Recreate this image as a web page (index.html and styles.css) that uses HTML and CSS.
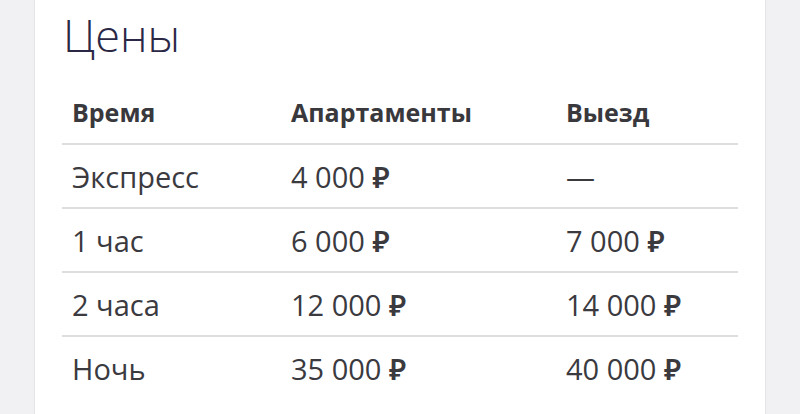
FILE: index.html
```html
<!DOCTYPE html>
<html lang="ru">
<head>
<meta charset="utf-8">
<link rel="stylesheet" href="styles.css">
</head>
<body>
<div class="page">
  <section class="card">
    <h1 class="title">Цены</h1>
    <table class="prices">
      <thead>
        <tr><th class="c1">Время</th><th class="c2">Апартаменты</th><th class="c3">Выезд</th></tr>
      </thead>
      <tbody>
        <tr><td>Экспресс</td><td>4 000 <span class="rub">₽</span></td><td>—</td></tr>
        <tr><td>1 час</td><td>6 000 <span class="rub">₽</span></td><td>7 000 <span class="rub">₽</span></td></tr>
        <tr><td>2 часа</td><td>12 000 <span class="rub">₽</span></td><td>14 000 <span class="rub">₽</span></td></tr>
        <tr><td>Ночь</td><td>35 000 <span class="rub">₽</span></td><td>40 000 <span class="rub">₽</span></td></tr>
      </tbody>
    </table>
  </section>
</div>
</body>
</html>
```
FILE: styles.css
```css
html, body {
  margin: 0;
  padding: 0;
  height: 100%;
}
body {
  background: #f1f1f4;
  font-family: "Open Sans", "Noto Sans", sans-serif;
  overflow: hidden;
}
.page {
  padding: 0 34px;
  height: 100%;
}
.card {
  background: #ffffff;
  border-left: 1px solid #e3e3e8;
  border-right: 1px solid #e3e3e8;
  height: 100%;
  padding: 8px 26px 0 27px;
  box-sizing: border-box;
}
.title {
  margin: 0;
  font-size: 45px;
  line-height: 54px;
  font-weight: 300;
  color: #2b2846;
  padding-left: 1px;
}
.prices {
  width: 676px;
  border-collapse: collapse;
  table-layout: fixed;
  margin-top: 19px;
}
.prices th,
.prices td {
  text-align: left;
  padding: 0 0 0 10px;
  vertical-align: middle;
}
.prices th {
  height: 62px;
  font-size: 25px;
  font-weight: 700;
  color: #38383d;
  border-bottom: 2px solid #dedee0;
}
.prices td {
  height: 62px;
  font-size: 29px;
  font-weight: 400;
  color: #3a3a3f;
}
.prices tbody tr + tr td {
  border-top: 2px solid #dedee0;
}
.rub {
  font-weight: 600;
}
.c1 { width: 209px; }
.c2 { width: 265px; }
.c3 { width: 172px; }
```
